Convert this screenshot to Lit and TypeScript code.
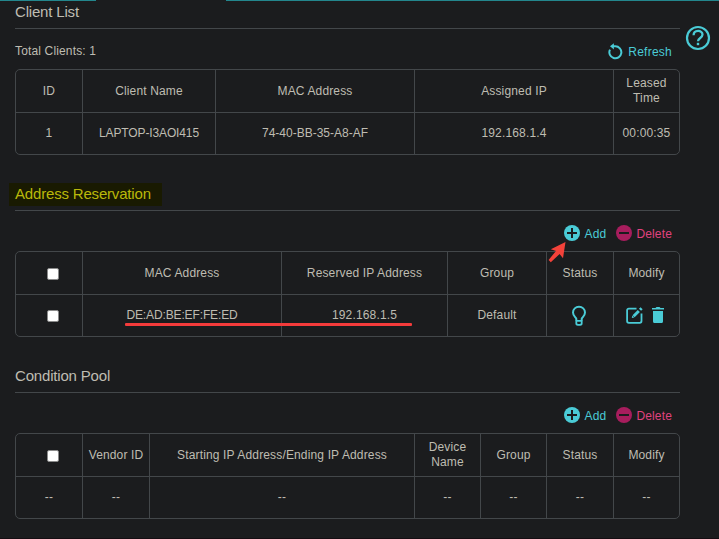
import { LitElement, html, css } from "lit";
import { customElement, property } from "lit/decorators.js";

const CHECK = "[check]";
const BULB = "[bulb]";
const EDIT = "[edit]";

const sheet = css`
  * { box-sizing: border-box; }
  svg { display: block; flex: none; }
`;

@customElement("data-grid")
class DataGrid extends LitElement {
  @property({ attribute: false }) columns: number[] = [];
  @property({ attribute: false }) rows: string[][] = [];

  static styles = [sheet, css`
    :host { display: block; }
    .grid {
      display: grid;
      grid-template-rows: 43px 41px;
      border: 1px solid #43474a;
      border-radius: 5px;
      overflow: hidden;
    }
    .cell {
      display: flex;
      align-items: center;
      justify-content: center;
      text-align: center;
      line-height: 15px;
      white-space: pre-line;
      border-right: 1px solid #43474a;
    }
    .cell.head { border-bottom: 1px solid #43474a; }
    .cell.last { border-right: 0; }
    .cell.code { letter-spacing: -0.13px; }
    .cell.digits { letter-spacing: 0; }
    .check {
      appearance: none;
      width: 12px;
      height: 12px;
      margin: 1px 0 0 8px;
      background: #fff;
      border: 1px solid #8b8b8b;
      border-radius: 2px;
    }
    .head .check { margin-top: 2px; }
    .bulb { margin-right: 2px; }
    .icons { display: flex; gap: 9px; align-items: center; margin: 0 3px 1px 0; }
  `];

  private content(value: string) {
    if (value === CHECK) return html`<input class="check" type="checkbox" aria-label="Select" />`;
    if (value === BULB)
      return html`<svg class="bulb" width="16" height="22" viewBox="0 0 16 22" fill="none" stroke="#4acbd6" stroke-width="2">
        <path d="M5.3 15.6V13.8C4.7 12.2 2 10.8 2 7.5a6 5.8 0 0 1 12 0c0 3.3-2.7 4.7-3.3 6.3v1.8" />
        <path d="M5.3 15.8h5.4v2.2a1.8 1.8 0 0 1-1.6 1.9H6.9A1.8 1.8 0 0 1 5.3 18z" stroke-width="1.8" />
      </svg>`;
    if (value === EDIT)
      return html`<span class="icons">
        <svg width="17" height="17" viewBox="0 0 17 17" fill="none" stroke="#4acbd6">
          <path d="M10.5 1.6H2.8a1.7 1.7 0 0 0-1.7 1.7v10.8a1.7 1.7 0 0 0 1.7 1.7h11a1.7 1.7 0 0 0 1.7-1.7V6.5" stroke-width="1.8" />
          <path d="M7.6 9.2l5.2-5.2" stroke-width="3" />
          <path d="M14 2.8l1.6-1.6" stroke-width="3" />
          <path d="M5.8 11l.5-2.6 2.1 2.1z" fill="#4acbd6" stroke="none" />
        </svg>
        <svg width="12" height="16" viewBox="0 0 12 16" fill="#4acbd6">
          <path d="M0 1h3.5l1-1h3l1 1H12v1.6H0zM1 4h10v10.4a1.6 1.6 0 0 1-1.6 1.6H2.6A1.6 1.6 0 0 1 1 14.4z" />
        </svg>
      </span>`;
    return value;
  }

  private tone(value: string) {
    if (/^[A-Z]+[-:][A-Z0-9:]+$/.test(value)) return "code";
    return /^\d+-/.test(value) ? "digits" : "";
  }

  render() {
    const template = this.columns.map((w, i) => (i === this.columns.length - 1 ? "1fr" : `${w}px`)).join(" ");
    return html`<div class="grid" style="grid-template-columns:${template}">
      ${this.rows.map((row, r) => row.map((value, c) => html`<div
        class="cell ${r === 0 ? "head" : ""} ${c === row.length - 1 ? "last" : ""} ${this.tone(value)}">${this.content(value)}</div>`))}
    </div>`;
  }
}

@customElement("edit-actions")
class EditActions extends LitElement {
  static styles = [sheet, css`
    :host { display: flex; justify-content: flex-end; gap: 10px; padding-right: 8px; height: 16px; }
    .action { display: flex; align-items: center; gap: 5px; color: #4acbd6; line-height: 16px; }
    .label { padding-top: 1px; }
    .delete { color: #e0427f; gap: 4px; }
  `];
  render() {
    return html`
      <span class="action"><svg width="16" height="16" viewBox="0 0 16 16">
        <circle cx="8" cy="8" r="8" fill="#4acbd6" /><path d="M3 8h10M8 3v10" stroke="#1b1c1e" stroke-width="2" />
      </svg><span class="label">Add</span></span>
      <span class="action delete"><svg width="16" height="16" viewBox="0 0 16 16">
        <circle cx="8" cy="8" r="8" fill="#a71d5d" /><path d="M3 8h10" stroke="#1b1c1e" stroke-width="2" />
      </svg><span class="label">Delete</span></span>`;
  }
}

@customElement("app-root")
class AppRoot extends LitElement {
  static styles = [sheet, css`
    :host {
      display: block;
      position: relative;
      box-sizing: border-box;
      width: 719px;
      height: 539px;
      overflow: hidden;
      background: #1b1c1e;
      border-bottom: 1px solid #150d12;
      color: #bfbcb2;
      font: 12px "Liberation Sans", Arial, sans-serif;
      letter-spacing: 0.15px;
    }
    .rail { display: flex; justify-content: space-between; height: 1px; }
    .rail .left { width: 96px; background: #23868d; }
    .rail .right { width: 493px; background: #23868d; }
    main { width: 665px; margin-left: 15px; }
    h2 {
      margin: 0;
      height: 28px;
      font-size: 15px;
      font-weight: 400;
      line-height: 22px;
      letter-spacing: -0.18px;
      border-bottom: 1px solid #43474a;
    }
    .status { display: flex; justify-content: space-between; height: 40px; padding: 14px 8px 0 0; line-height: 16px; }
    .refresh { display: flex; gap: 5px; color: #4acbd6; letter-spacing: 0.25px; padding-top: 1px; }
    .refresh svg { margin-top: -1px; }
    .reserve, .pool { margin-top: 28px; }
    .mark { display: inline-block; margin-left: -6px; padding: 0 11px 0 6px; height: 23px; line-height: 21px; background: #191a01; color: #b9b80a; }
    edit-actions { margin: 14px 0 10px; }
    .help { position: absolute; left: 685px; top: 25px; }
    .underline { position: absolute; left: 125px; top: 323px; width: 287px; height: 3px; border-radius: 1px; background: #f43b3b; }
    .pointer { position: absolute; left: 547px; top: 241px; }
  `];

  render() {
    return html`
      <div class="rail"><span class="left"></span><span class="right"></span></div>
      <main>
        <section>
          <h2>Client List</h2>
          <div class="status">
            <span>Total Clients: 1</span>
            <span class="refresh"><svg width="15" height="17" viewBox="0 0 15 17" fill="none" stroke="#4acbd6" stroke-width="2">
              <path d="M2 6.6A6 6 0 1 0 7.2 3.3H4" /><path d="M5.9 .2L2 3.3l3.9 3.1z" fill="#4acbd6" stroke="none" />
            </svg>Refresh</span>
          </div>
          <data-grid .columns=${[67, 133, 199, 199, 66]} .rows=${[
            ["ID", "Client Name", "MAC Address", "Assigned IP", "Leased\nTime"],
            ["1", "LAPTOP-I3AOI415", "74-40-BB-35-A8-AF", "192.168.1.4", "00:00:35"],
          ]}></data-grid>
        </section>
        <section class="reserve">
          <h2><span class="mark">Address Reservation</span></h2>
          <edit-actions></edit-actions>
          <data-grid .columns=${[67, 199, 166, 99, 67, 66]} .rows=${[
            [CHECK, "MAC Address", "Reserved IP Address", "Group", "Status", "Modify"],
            [CHECK, "DE:AD:BE:EF:FE:ED", "192.168.1.5", "Default", BULB, EDIT],
          ]}></data-grid>
        </section>
        <section class="pool">
          <h2>Condition Pool</h2>
          <edit-actions></edit-actions>
          <data-grid .columns=${[67, 67, 265, 66, 66, 67, 66]} .rows=${[
            [CHECK, "Vendor ID", "Starting IP Address/Ending IP Address", "Device\nName", "Group", "Status", "Modify"],
            ["--", "--", "--", "--", "--", "--", "--"],
          ]}></data-grid>
        </section>
      </main>
      <svg class="help" width="26" height="26" viewBox="0 0 26 26" fill="none" stroke="#4acbd6">
        <circle cx="13" cy="13" r="11" stroke-width="2.2" />
        <path d="M8.6 10.3c0-5.8 8.9-5.6 8.9-.7 0 3.4-4.5 3.3-4.5 6.7" stroke-width="2.3" />
        <path d="M11.8 17.8h2.4v2.4h-2.4z" fill="#4acbd6" stroke="none" />
      </svg>
      <div class="underline"></div>
      <svg class="pointer" width="20" height="22" viewBox="0 0 20 22">
        <path d="M18.5 1L16 17.3l-3.4-4.2L3.8 21.2 1.6 19 9 9.9 3.8 8.2z" fill="#f3423a" />
      </svg>
    `;
  }
}
